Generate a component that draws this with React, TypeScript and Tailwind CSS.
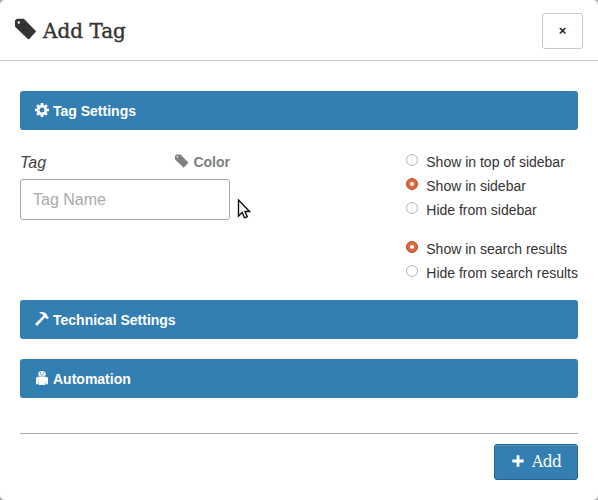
import type { ReactNode } from 'react';

function TagIcon({ className }: { className: string }) {
  return (
    <svg viewBox="0 0 22 22" className={className} fill="currentColor">
      <path fillRule="evenodd" d="M0 2.6L2 .8H8.8L20.6 12.8Q21.2 13.5 20.6 14.1L14.2 20.9Q13.5 21.5 12.9 20.9L.6 9.2Q0 8.6 0 7.8ZM3.8 3.3a1.2 1.2 0 1 0 0 2.4a1.2 1.2 0 0 0 0-2.4Z" />
    </svg>
  );
}

function CogIcon() {
  return (
    <svg viewBox="0 0 14 14" className="h-3.5 w-3.5" fill="none" stroke="currentColor">
      <circle cx="7" cy="7" r="3.9" strokeWidth="2.8" />
      <path strokeWidth="2.7" d="M7 0v2.7M7 11.3V14M0 7h2.7M11.3 7H14M2.1 2.1l1.8 1.8M10.1 10.1l1.8 1.8M2.1 11.9l1.8-1.8M10.1 3.9l1.8-1.8" />
    </svg>
  );
}

function HammerIcon() {
  return (
    <svg viewBox="0 0 14 14" className="h-3.5 w-3.5" fill="currentColor">
      <path d="M4.6.4C7.3-.3 9.3.1 10.9 1.6L12.1 3.1L12.4 4.3L14 5.3L12.3 7.3L11 5.9L10 5.6L2.1 14L0 12.1L8.3 3.8C7.7 2.2 6.7 1.4 4.6 1.3Z" />
    </svg>
  );
}

function RobotIcon() {
  return (
    <svg viewBox="0 0 14 14" className="h-3.5 w-3.5" fill="currentColor">
      <path fillRule="evenodd" d="M3.2 3.2Q3.2 0 7 0Q10.8 0 10.8 3.2Q10.8 5.2 7 5.2Q3.2 5.2 3.2 3.2ZM4.9 1.6v1h1v-1ZM8.1 1.6v1h1v-1ZM4.9 3.2Q7 4.4 9.1 3.2L8.6 4Q7 5 5.4 4Z" />
      <path d="M3.5 5.4H10.5V13Q10.5 14 9.5 14H4.5Q3.5 14 3.5 13ZM1 7.1Q1 6 3.4 5.8V11.2H1ZM10.5 5.8Q13 6 13 7.1V11.2H10.5ZM1 11.2H3v2.1H1ZM11 11.2h2v2.1H11Z" />
    </svg>
  );
}

function Section({ icon, title, className = '' }: { icon: ReactNode; title: string; className?: string }) {
  return (
    <div className={`flex h-[39px] items-center rounded-[3px] bg-[#337fb2] pl-[15px] text-sm font-bold text-white ${className}`}>
      <span className="mr-1 -translate-y-px">{icon}</span>
      <span className="pt-px">{title}</span>
    </div>
  );
}

function Choice({ label, checked = false }: { label: string; checked?: boolean }) {
  return (
    <label className="flex h-6 items-center text-sm leading-6 text-[#333]">
      <span className={`mr-2 -mt-1 flex h-3 w-3 items-center justify-center rounded-full border ${checked ? 'border-[#b5502c] bg-[#df683d]' : 'border-[#b6b6b6] bg-white'}`}>
        {checked && <span className="h-1 w-1 rounded-full bg-white" />}
      </span>
      <span className="whitespace-nowrap">{label}</span>
    </label>
  );
}

export default function App() {
  return (
    <div className="h-[500px] w-[598px] overflow-hidden bg-[#aaa] font-['Liberation_Sans',Arial,sans-serif]">
      <div className="relative h-full rounded-[5px] bg-white">
        <header className="flex h-[61px] items-start justify-between border-b border-[#c5c5c5] pl-[15px] pr-[15px]">
          <div className="flex pt-[18px] text-[#333]">
            <TagIcon className="h-[22px] w-[22px]" />
            <h1 className="ml-[6px] font-['DejaVu_Serif',serif] text-[20px] leading-[26px] [-webkit-text-stroke:0.4px_#333]">Add Tag</h1>
          </div>
          <button className="mt-[13px] flex h-9 w-[41px] items-center justify-center rounded-[3px] border border-[#c8c8c8] text-[13px] font-bold text-[#222]">×</button>
        </header>
        <main className="px-5 pt-[30px]">
          <Section icon={<CogIcon />} title="Tag Settings" />
          <div className="flex h-[170px] justify-between pt-5">
            <div className="w-[210px]">
              <div className="flex h-[29px] items-start justify-between">
                <label className="pt-px text-base italic leading-6 text-[#444]">Tag</label>
                <span className="flex pt-[3px] text-sm font-bold leading-[18px] text-[#808080]">
                  <TagIcon className="mr-1 mt-px h-[14px] w-[14px]" />Color
                </span>
              </div>
              <input placeholder="Tag Name" className="block h-[41px] w-full rounded-[3px] border border-[#aaa] px-3 text-base text-[#444] outline-none placeholder:text-[#aaa]" />
            </div>
            <div>
              <Choice label="Show in top of sidebar" />
              <Choice label="Show in sidebar" checked />
              <Choice label="Hide from sidebar" />
              <div className="mt-[15px]">
                <Choice label="Show in search results" checked />
                <Choice label="Hide from search results" />
              </div>
            </div>
          </div>
          <Section icon={<HammerIcon />} title="Technical Settings" />
          <Section icon={<RobotIcon />} title="Automation" className="mt-5" />
          <footer className="mt-[35px] flex justify-end border-t border-[#aaa] pt-[10px]">
            <button className="flex h-9 w-[84px] items-center rounded-[3px] border border-[#22658f] bg-[#337fb2] pl-[17px] text-white shadow-[inset_0_1px_0_#5796c0]">
              <svg viewBox="0 0 12 12" className="mr-2 h-3 w-3 -translate-y-px" fill="none" stroke="currentColor" strokeWidth="2.8"><path d="M6 .3v11.4M.3 6h11.4" /></svg>
              <span className="inline-block translate-y-px scale-y-110 font-['DejaVu_Serif',serif] text-[15.5px] tracking-[-0.5px]">Add</span>
            </button>
          </footer>
        </main>
        <svg viewBox="0 0 14 20" className="absolute left-[237px] top-[199px] h-5 w-[14px]">
          <path d="M1.5 1V17L5.2 13.5L7.6 18.8L10.3 17.6L8 12.5H12.5Z" fill="white" stroke="#111" strokeWidth="1.4" />
        </svg>
      </div>
    </div>
  );
}
